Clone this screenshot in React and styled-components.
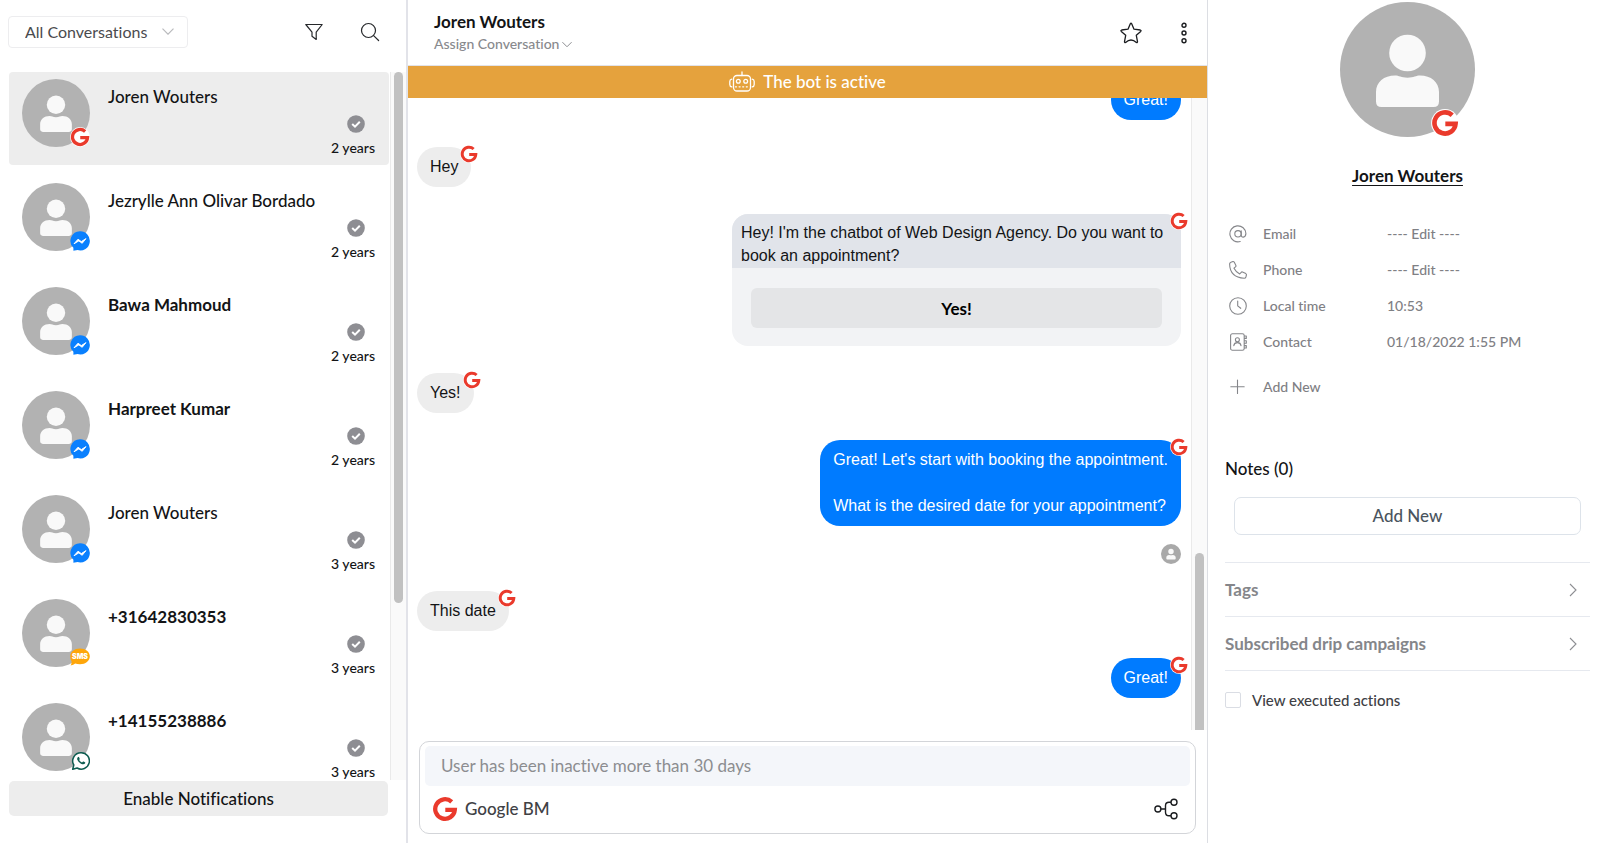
import React from "react";
import styled, { createGlobalStyle } from "styled-components";

const GlobalStyle = createGlobalStyle`
  *, *::before, *::after { box-sizing: border-box; }
  body {
    margin: 0;
    background: #fff;
    color: #131416;
    font-family: Lato, "Liberation Sans", sans-serif;
    font-size: 17px;
    line-height: 22px;
    font-variant-ligatures: none;
  }
  button, input, select { font: inherit; font-variant-ligatures: none; color: inherit; }
  ul, ol, dl, dd, h1, h2, p { margin: 0; padding: 0; }
  ul, ol { list-style: none; }
  svg { display: block; flex: none; }
`;

/* ---------- icons ---------- */

const PersonIcon = ({ size, fill = "#b2b2b2" }) => (
  <svg width={size} height={size} viewBox="0 0 135 135" aria-hidden="true">
    <circle cx="67.5" cy="67.5" r="67.5" fill={fill} />
    <circle cx="67.5" cy="51" r="18.300" fill="#f9f9f9" />
    <path
      d="M36 90C36 80 44 73.500 55 73.500C59 73.500 61 75.700 67.500 75.700C74 75.700 76 73.500 80 73.500C91 73.500 99 80 99 90V99.500Q99 105 93.500 105H41.500Q36 105 36 99.500Z"
      fill="#f9f9f9"
    />
  </svg>
);

const GoogleIcon = ({ size }) => (
  <svg width={size} height={size} viewBox="-1 -1 26 26" aria-hidden="true">
    <circle cx="12" cy="12" r="12.900" fill="#fff" />
    <path d="M18.700 4.800A9.800 9.800 0 1 0 21.800 12.800H12.300" fill="none" stroke="#ea3a2c" strokeWidth="4.300" />
  </svg>
);

const MessengerIcon = ({ size }) => (
  <svg width={size} height={size} viewBox="0 0 20 20" aria-hidden="true">
    <path d="M10 .3A9.600 9.600 0 1 1 7.500 19.100L3.400 19.800V16.800A9.600 9.600 0 0 1 10 .3Z" fill="#0a80fe" />
    <path d="M4 12.800L8 8.200L11.300 10.600L16 7.600L12.200 12.300L8.800 9.900Z" fill="#fff" stroke="#fff" strokeWidth=".9" strokeLinejoin="round" />
  </svg>
);

const SmsIcon = ({ size }) => (
  <svg width={size} height={size} viewBox="0 0 20 20" aria-hidden="true">
    <path d="M10 1.500C15.600 1.500 19.800 4.700 19.800 9.300S15.600 17.300 10 17.300Q7 17.300 5.200 16.600Q3.500 18.300 .6 18.600Q1.700 16.800 1.600 14.500Q.3 12.500 .3 9.300C.3 4.700 4.400 1.500 10 1.500Z" fill="#fea60a" />
    <text x="10" y="12" textAnchor="middle" fontFamily="Inter, sans-serif" fontWeight="900" fontSize="7" fill="#fff">SMS</text>
  </svg>
);

const WhatsappIcon = ({ size }) => (
  <svg width={size} height={size} viewBox="0 0 20 20" aria-hidden="true">
    <path
      d="M11 1.700A8.200 8.200 0 1 1 7.100 17L2.700 18.300L3.800 14A8.200 8.200 0 0 1 11 1.700Z"
      fill="#fff"
      stroke="#0d5c50"
      strokeWidth="1.500"
      strokeLinejoin="round"
    />
    <path d="M7.800 6.200Q8.700 5.400 9.100 6.300L9.700 7.700Q9.900 8.200 9.100 9Q10.200 10.900 12 11.500L12.800 10.700Q13.100 10.300 13.600 10.600L15 11.300Q15.500 11.700 15 12.500Q13.800 13.900 11.500 12.900Q8.400 11.600 7.300 8.700Q6.900 7.200 7.800 6.200Z" fill="#0d5c50" />
  </svg>
);

const channelIcons = { google: GoogleIcon, messenger: MessengerIcon, sms: SmsIcon, whatsapp: WhatsappIcon };

const CheckIcon = () => (
  <svg width="18" height="18" viewBox="0 0 18 18" aria-hidden="true">
    <circle cx="9" cy="9" r="8.800" fill="#8e8e93" />
    <path d="M5.200 9L8 11.700L12.800 6.800" fill="none" stroke="#fff" strokeWidth="2" />
  </svg>
);

const ChevronIcon = ({ color = "#8d8e92", width = 12, right = false }) =>
  right ? (
    <svg width="8" height="14" viewBox="0 0 8 14" fill="none" stroke={color} strokeWidth="1.100" aria-hidden="true">
      <path d="M1 1L7 7L1 13" />
    </svg>
  ) : (
    <svg width={width} height="7" viewBox="0 0 12 7" fill="none" stroke={color} strokeWidth="1.200" aria-hidden="true">
      <path d="M.5 .7L6 6.200L11.500 .7" />
    </svg>
  );

const FilterIcon = () => (
  <svg width="20" height="20" viewBox="0 0 20 20" fill="none" stroke="#26282b" strokeWidth="1.200" strokeLinejoin="round" aria-hidden="true">
    <path d="M1.800 2.500H18.200L12.200 10.200V17.400L8 14.200V10.200Z" />
  </svg>
);

const SearchIcon = () => (
  <svg width="20" height="20" viewBox="0 0 20 20" fill="none" stroke="#26282b" strokeWidth="1.200" strokeLinecap="round" aria-hidden="true">
    <circle cx="8.500" cy="8.500" r="7" />
    <path d="M13.600 13.600L18.600 18.500" />
  </svg>
);

const StarIcon = () => (
  <svg width="22" height="22" viewBox="0 0 22 22" fill="none" stroke="#1b1d20" strokeWidth="1.300" strokeLinejoin="round" aria-hidden="true">
    <path d="M10.300 1.800Q11 .7 11.700 1.800L14 7.200L20.300 8Q21.600 8.400 20.700 9.400L16.300 13.300L17.500 19.700Q17.500 20.900 16.400 20.400Q11 15.600 5.600 20.400Q4.500 20.900 4.500 19.700L5.700 13.300L1.300 9.400Q.4 8.400 1.700 8L8 7.200Z" />
  </svg>
);

const MoreIcon = () => (
  <svg width="8" height="22" viewBox="0 0 8 22" fill="none" stroke="#1b1d20" strokeWidth="1.400" aria-hidden="true">
    <circle cx="4" cy="3.300" r="2" />
    <circle cx="4" cy="11" r="2" />
    <circle cx="4" cy="18.700" r="2" />
  </svg>
);

const BotIcon = () => (
  <svg width="26" height="22" viewBox="0 0 26 22" fill="none" stroke="#fff" strokeWidth="1.300" strokeLinecap="round" aria-hidden="true">
    <rect x="4.500" y="4.500" width="17" height="15.500" rx="3.500" />
    <path d="M13 4.500V1M2.800 8.200Q.8 8.500 .8 10.500V13.500Q.8 15.600 2.800 15.900M23.200 8.200Q25.200 8.500 25.200 10.500V13.500Q25.200 15.600 23.200 15.900" />
    <circle cx="9.300" cy="10.300" r="1.900" />
    <circle cx="16.700" cy="10.300" r="1.900" />
    <path d="M6.500 15.800H20" strokeDasharray="1 2.600" />
  </svg>
);

const FlowIcon = () => (
  <svg width="24" height="22" viewBox="0 0 24 22" fill="none" stroke="#1b1d20" strokeWidth="1.400" aria-hidden="true">
    <circle cx="3.900" cy="11" r="3" />
    <circle cx="20" cy="4.200" r="3" />
    <circle cx="20" cy="17.700" r="3" />
    <path d="M7 11H11.500M17 4.200H15Q11.500 4.200 11.500 7.700V14.200Q11.500 17.700 15 17.700H17" />
  </svg>
);

const LineIcon = ({ children }) => (
  <svg width="18" height="18" viewBox="0 0 18 18" fill="none" stroke="#85868a" strokeWidth="1.100" strokeLinecap="round" strokeLinejoin="round" aria-hidden="true">
    {children}
  </svg>
);

const AtIcon = () => (
  <LineIcon>
    <circle cx="9" cy="8.800" r="3.200" />
    <path d="M12.200 5.700V10Q12.300 12.200 14.300 12.100Q16.700 11.600 16.900 8.600A8 8 0 1 0 11.200 16.500" />
  </LineIcon>
);
const PhoneIcon = () => (
  <LineIcon>
    <path d="M2 1.200L3.800 .6Q4.800 .4 5.300 1.300L6.900 4.500Q7.200 5.300 6.500 5.900L5 7.200Q6.800 10.800 10.700 12.900L12.200 11.300Q12.700 10.700 13.500 11L16.800 12.600Q17.600 13.100 17.400 14L16.900 16Q16.500 17.300 15.300 17.300Q.8 16.500 .6 2.800Q.8 1.600 2 1.200Z" />
  </LineIcon>
);
const ClockIcon = () => (
  <LineIcon>
    <circle cx="9" cy="9" r="8.300" />
    <path d="M8.700 4V8.900L11.700 11.300" />
  </LineIcon>
);
const ContactIcon = () => (
  <LineIcon>
    <rect x="1.600" y=".8" width="13.600" height="16.400" rx="1.800" />
    <circle cx="8.400" cy="6.800" r="2" />
    <path d="M4.800 12.600Q5.200 9.600 8.400 9.600T12 12.600M15.500 3H17.300V5.400H15.500M15.500 7.800H17.300V10.200H15.500M15.500 12.600H17.300V15H15.500" />
  </LineIcon>
);
const PlusIcon = () => (
  <LineIcon>
    <path d="M8.500 2V15.500M1.800 8.700H15.200" />
  </LineIcon>
);

/* ---------- layout ---------- */

const Page = styled.div`
  display: grid;
  grid-template-columns: minmax(0, 51fr) minmax(0, 100fr) minmax(0, 49fr);
  height: 100vh;
  overflow: hidden;
`;

const Sidebar = styled.aside`
  display: flex;
  flex-direction: column;
  min-height: 0;
  padding-bottom: 27px;
  border-right: 2px solid #e2e3e9;
`;

const SidebarTop = styled.div`
  display: flex;
  align-items: center;
  gap: 36px;
  height: 72px;
  padding: 0 26px 8px 8px;
`;

const SelectBox = styled.label`
  position: relative;
  width: 180px;
  margin-right: auto;

  svg { position: absolute; right: 14px; top: 12px; pointer-events: none; }
`;

const FilterSelect = styled.select`
  appearance: none;
  display: block;
  width: 100%;
  height: 32px;
  padding: 0 30px 0 16px;
  border: 1px solid #ededef;
  border-radius: 4px;
  background: #fff;
  color: #4a4b4e;
  font-size: 16px;
`;

const IconButton = styled.button`
  display: grid;
  place-items: center;
  padding: 0;
  border: 0;
  background: none;
`;

const ScrollArea = styled.div`
  display: flex;
  flex: 1;
  min-height: 0;
`;

const ScrollTrack = styled.div`
  display: flex;
  flex-direction: column;
  justify-content: ${(p) => (p.$atEnd ? "flex-end" : "flex-start")};
  flex: none;
  width: 16px;
  padding: 0 3px;
  border-left: 1px solid #eaeaea;
  background: #fafafa;
`;

const ScrollThumb = styled.div`
  height: ${(p) => p.$share}%;
  border-radius: ${(p) => (p.$cut ? "5px 5px 0 0" : "5px")};
  background: #c1c1c1;
`;

const ConversationList = styled.ul`
  display: flex;
  flex-direction: column;
  gap: 11px;
  flex: 1;
  min-width: 0;
  padding: 0 1px 0 9px;
  overflow: hidden;
`;

const ConversationItem = styled.li`
  flex: none;
`;

const ConversationButton = styled.button`
  display: flex;
  align-items: flex-start;
  width: 100%;
  height: 93px;
  padding: 7px 14px 0 13px;
  border: 0;
  border-radius: 4px;
  background: ${(p) => (p.$selected ? "#ededed" : "transparent")};
  text-align: left;
`;

const AvatarBox = styled.span`
  position: relative;
  flex: none;
`;

const Badge = styled.span`
  position: absolute;
  right: ${(p) => p.$right || 0}px;
  bottom: 0;
`;

const ConversationName = styled.span`
  flex: 1;
  min-width: 0;
  padding: 7px 0 0 18px;
  font-weight: ${(p) => (p.$unread ? 700 : 500)};
  white-space: nowrap;
`;

const ConversationMeta = styled.span`
  display: flex;
  flex-direction: column;
  align-items: flex-end;
  gap: 5px;
  padding-top: 36px;
  font-size: 14px;
  line-height: 20px;
  font-weight: 500;
  white-space: nowrap;

  svg { margin-right: 10px; }
`;

const NotifyButton = styled.button`
  height: 35px;
  margin: 1px 18px 0 9px;
  padding: 0;
  border: 0;
  border-radius: 5px;
  background: #ededed;
  font-weight: 500;
`;

const Chat = styled.main`
  display: flex;
  flex-direction: column;
  min-width: 0;
  min-height: 0;
  border-right: 1px solid #dcdee3;
`;

const ChatHeader = styled.header`
  display: flex;
  align-items: center;
  gap: 38px;
  height: 66px;
  padding: 1px 19px 0 26px;
  border-bottom: 1px solid #e2e3e9;
`;

const ChatHeading = styled.div`
  margin-right: auto;
`;

const ChatTitle = styled.h1`
  font-size: 17px;
  line-height: 22px;
  font-weight: 700;
`;

const AssignButton = styled.button`
  display: flex;
  align-items: center;
  gap: 3px;
  padding: 0;
  border: 0;
  background: none;
  color: #88898d;
  font-size: 14px;
  font-weight: 500;
`;

const Banner = styled.div`
  display: flex;
  align-items: center;
  justify-content: center;
  gap: 8px;
  height: 32px;
  background: #e5a23d;
  color: #fff;
  font-weight: 500;
`;

const Messages = styled.ol`
  display: flex;
  flex-direction: column;
  justify-content: flex-end;
  gap: 27px;
  flex: 1;
  min-width: 0;
  padding: 0 10px 32px 9px;
  overflow: hidden;
  font-family: "Liberation Sans", Arial, sans-serif;
  font-size: 16px;
  line-height: 23px;
`;

const Message = styled.li`
  display: flex;
  flex-direction: column;
  align-items: ${(p) => (p.$mine ? "flex-end" : "flex-start")};
  gap: 18px;
  flex: none;
`;

const BubbleBox = styled.div`
  position: relative;
`;

const Bubble = styled.p`
  padding: 8px 13px 9px;
  border-radius: 20px;
  background: ${(p) => (p.$mine ? "#007bff" : "#ededed")};
  color: ${(p) => (p.$mine ? "#fff" : "#131416")};
  white-space: pre-line;
`;

const BubbleBadge = styled.span`
  position: absolute;
  top: -2px;
  right: -7px;
`;

const Card = styled.div`
  width: 449px;
  border-radius: 16px;
  background: #f2f3f5;
  overflow: hidden;
`;

const CardText = styled.p`
  padding: 7px 9px 1px;
  background: #e1e4ea;
`;

const CardBody = styled.div`
  padding: 20px 19px 18px;
`;

const CardButton = styled.button`
  width: 100%;
  height: 40px;
  padding: 0;
  border: 0;
  border-radius: 6px;
  background: #e4e5e7;
  color: #000;
  font-family: Lato, "Liberation Sans", sans-serif;
  font-size: 17px;
  font-weight: 700;
`;

const Composer = styled.form`
  margin: 11px 11px 9px;
  padding: 4px 5px 0;
  border: 1px solid #d3d5d9;
  border-radius: 10px;
`;

const ComposerInput = styled.input`
  display: block;
  width: 100%;
  height: 40px;
  padding: 0 16px 1px;
  border: 0;
  border-radius: 5px;
  background: #f4f6fa;

  &::placeholder { color: #8c8d90; opacity: 1; }
`;

const ComposerBar = styled.div`
  display: flex;
  align-items: center;
  justify-content: space-between;
  height: 47px;
  padding: 0 12px 1px 7px;
`;

const ChannelButton = styled.button`
  display: flex;
  align-items: center;
  gap: 7px;
  padding: 0;
  border: 0;
  background: none;
  color: #404145;
  font-weight: 500;
`;

const Details = styled.aside`
  display: flex;
  flex-direction: column;
  min-width: 0;
  padding: 2px 10px 0 17px;
`;

const Profile = styled.div`
  display: flex;
  flex-direction: column;
  align-items: center;
  gap: 28px;
`;

const ProfileLink = styled.a`
  color: #131416;
  font-weight: 700;
  text-underline-offset: 3px;
`;

const Fields = styled.dl`
  display: flex;
  flex-direction: column;
  gap: 14px;
  padding: 36px 0 0 4px;
  color: #7f8084;
  font-size: 14px;
  font-weight: 500;
`;

const Field = styled.div`
  display: grid;
  grid-template-columns: 34px 124px 1fr;
  align-items: center;
`;

const FieldTerm = styled.dt`
  display: contents;
`;

const TextButton = styled.button`
  padding: 0;
  border: 0;
  background: none;
`;

const AddField = styled.button`
  display: grid;
  grid-template-columns: 34px auto;
  align-items: center;
  align-self: flex-start;
  margin: 23px 0 0 4px;
  padding: 0;
  border: 0;
  background: none;
  color: #7f8084;
  font-size: 14px;
  font-weight: 500;
`;

const SectionTitle = styled.h2`
  margin-top: 60px;
  font-size: 17px;
  line-height: 22px;
  font-weight: 500;
`;

const AddNote = styled.button`
  height: 38px;
  margin: 17px 9px 27px;
  padding: 0;
  border: 1px solid #dde3ea;
  border-radius: 7px;
  background: #fff;
  color: #4a545e;
  font-weight: 500;
`;

const Sections = styled.div`
  border-top: 1px solid #e6e9ef;
`;

const Section = styled.button`
  display: flex;
  align-items: center;
  justify-content: space-between;
  width: 100%;
  height: 54px;
  padding: 0 13px 0 0;
  border: 0;
  border-bottom: 1px solid #e6e9ef;
  background: none;
  color: #85868a;
  font-weight: 700;
`;

const ActionsToggle = styled.label`
  display: flex;
  align-items: center;
  gap: 11px;
  padding-top: 18px;
  color: #404145;
  font-size: 15px;
  font-weight: 500;
`;

const Checkbox = styled.input`
  appearance: none;
  width: 16px;
  height: 16px;
  margin: 0;
  border: 1px solid #dadde4;
  border-radius: 2px;
  background: #fff;
`;

/* ---------- data ---------- */

const conversations = [
  { name: "Joren Wouters", channel: "google", age: "2 years", selected: true },
  { name: "Jezrylle Ann Olivar Bordado", channel: "messenger", age: "2 years" },
  { name: "Bawa Mahmoud", channel: "messenger", age: "2 years", unread: true },
  { name: "Harpreet Kumar", channel: "messenger", age: "2 years", unread: true },
  { name: "Joren Wouters", channel: "messenger", age: "3 years" },
  { name: "+31642830353", channel: "sms", age: "3 years", unread: true },
  { name: "+14155238886", channel: "whatsapp", age: "3 years", unread: true },
];

const messages = [
  { mine: true, text: "Great!" },
  { text: "Hey" },
  { mine: true, text: "Hey! I'm the chatbot of Web Design Agency. Do you want to book an appointment?", reply: "Yes!" },
  { text: "Yes!" },
  { mine: true, text: "Great! Let's start with booking the appointment.\n\nWhat is the desired date for your appointment?", seen: true },
  { text: "This date" },
  { mine: true, text: "Great!" },
];

const fields = [
  { Icon: AtIcon, label: "Email", editable: true },
  { Icon: PhoneIcon, label: "Phone", editable: true },
  { Icon: ClockIcon, label: "Local time", value: "10:53" },
  { Icon: ContactIcon, label: "Contact", value: "01/18/2022 1:55 PM" },
];

/* ---------- parts ---------- */

function Avatar({ size, channel, badgeSize, badgeRight }) {
  const Channel = channelIcons[channel];
  return (
    <AvatarBox>
      <PersonIcon size={size} />
      <Badge $right={badgeRight}>
        <Channel size={badgeSize} />
      </Badge>
    </AvatarBox>
  );
}

function Conversation({ name, channel, age, selected, unread }) {
  return (
    <ConversationItem>
      <ConversationButton type="button" $selected={selected}>
        <Avatar size={68} channel={channel} badgeSize={20} />
        <ConversationName $unread={unread}>{name}</ConversationName>
        <ConversationMeta>
          <CheckIcon />
          {age}
        </ConversationMeta>
      </ConversationButton>
    </ConversationItem>
  );
}

function ChatMessage({ mine, text, reply, seen }) {
  return (
    <Message $mine={mine}>
      <BubbleBox>
        {reply ? (
          <Card>
            <CardText>{text}</CardText>
            <CardBody>
              <CardButton type="button">{reply}</CardButton>
            </CardBody>
          </Card>
        ) : (
          <Bubble $mine={mine}>{text}</Bubble>
        )}
        <BubbleBadge>
          <GoogleIcon size={18} />
        </BubbleBadge>
      </BubbleBox>
      {seen && <PersonIcon size={20} fill="#a9a9a9" />}
    </Message>
  );
}

export default function App() {
  return (
    <>
      <GlobalStyle />
      <Page>
        <Sidebar>
          <SidebarTop>
            <SelectBox>
              <FilterSelect aria-label="Conversation filter">
                <option>All Conversations</option>
              </FilterSelect>
              <ChevronIcon color="#b9babd" />
            </SelectBox>
            <IconButton type="button" aria-label="Filter">
              <FilterIcon />
            </IconButton>
            <IconButton type="button" aria-label="Search">
              <SearchIcon />
            </IconButton>
          </SidebarTop>
          <ScrollArea>
            <ConversationList>
              {conversations.map((c, i) => (
                <Conversation key={i} {...c} />
              ))}
            </ConversationList>
            <ScrollTrack>
              <ScrollThumb $share={75} />
            </ScrollTrack>
          </ScrollArea>
          <NotifyButton type="button">Enable Notifications</NotifyButton>
        </Sidebar>

        <Chat>
          <ChatHeader>
            <ChatHeading>
              <ChatTitle>Joren Wouters</ChatTitle>
              <AssignButton type="button">
                Assign Conversation
                <ChevronIcon width={10} />
              </AssignButton>
            </ChatHeading>
            <IconButton type="button" aria-label="Star conversation">
              <StarIcon />
            </IconButton>
            <IconButton type="button" aria-label="More options">
              <MoreIcon />
            </IconButton>
          </ChatHeader>
          <Banner>
            <BotIcon />
            The bot is active
          </Banner>
          <ScrollArea>
            <Messages>
              {messages.map((m, i) => (
                <ChatMessage key={i} {...m} />
              ))}
            </Messages>
            <ScrollTrack $atEnd>
              <ScrollThumb $share={28} $cut />
            </ScrollTrack>
          </ScrollArea>
          <Composer>
            <ComposerInput disabled aria-label="Message" placeholder="User has been inactive more than 30 days" />
            <ComposerBar>
              <ChannelButton type="button">
                <GoogleIcon size={26} />
                Google BM
              </ChannelButton>
              <IconButton type="button" aria-label="Send flow">
                <FlowIcon />
              </IconButton>
            </ComposerBar>
          </Composer>
        </Chat>

        <Details>
          <Profile>
            <Avatar size={135} channel="google" badgeSize={28} badgeRight={16} />
            <ProfileLink href="#profile">Joren Wouters</ProfileLink>
          </Profile>
          <Fields>
            {fields.map(({ Icon, label, editable, value }) => (
              <Field key={label}>
                <FieldTerm>
                  <Icon />
                  <span>{label}</span>
                </FieldTerm>
                <dd>{editable ? <TextButton type="button">---- Edit ----</TextButton> : value}</dd>
              </Field>
            ))}
          </Fields>
          <AddField type="button">
            <PlusIcon />
            <span>Add New</span>
          </AddField>
          <SectionTitle>Notes (0)</SectionTitle>
          <AddNote type="button">Add New</AddNote>
          <Sections>
            <Section type="button">
              Tags
              <ChevronIcon right />
            </Section>
            <Section type="button">
              Subscribed drip campaigns
              <ChevronIcon right />
            </Section>
          </Sections>
          <ActionsToggle>
            <Checkbox type="checkbox" />
            View executed actions
          </ActionsToggle>
        </Details>
      </Page>
    </>
  );
}
